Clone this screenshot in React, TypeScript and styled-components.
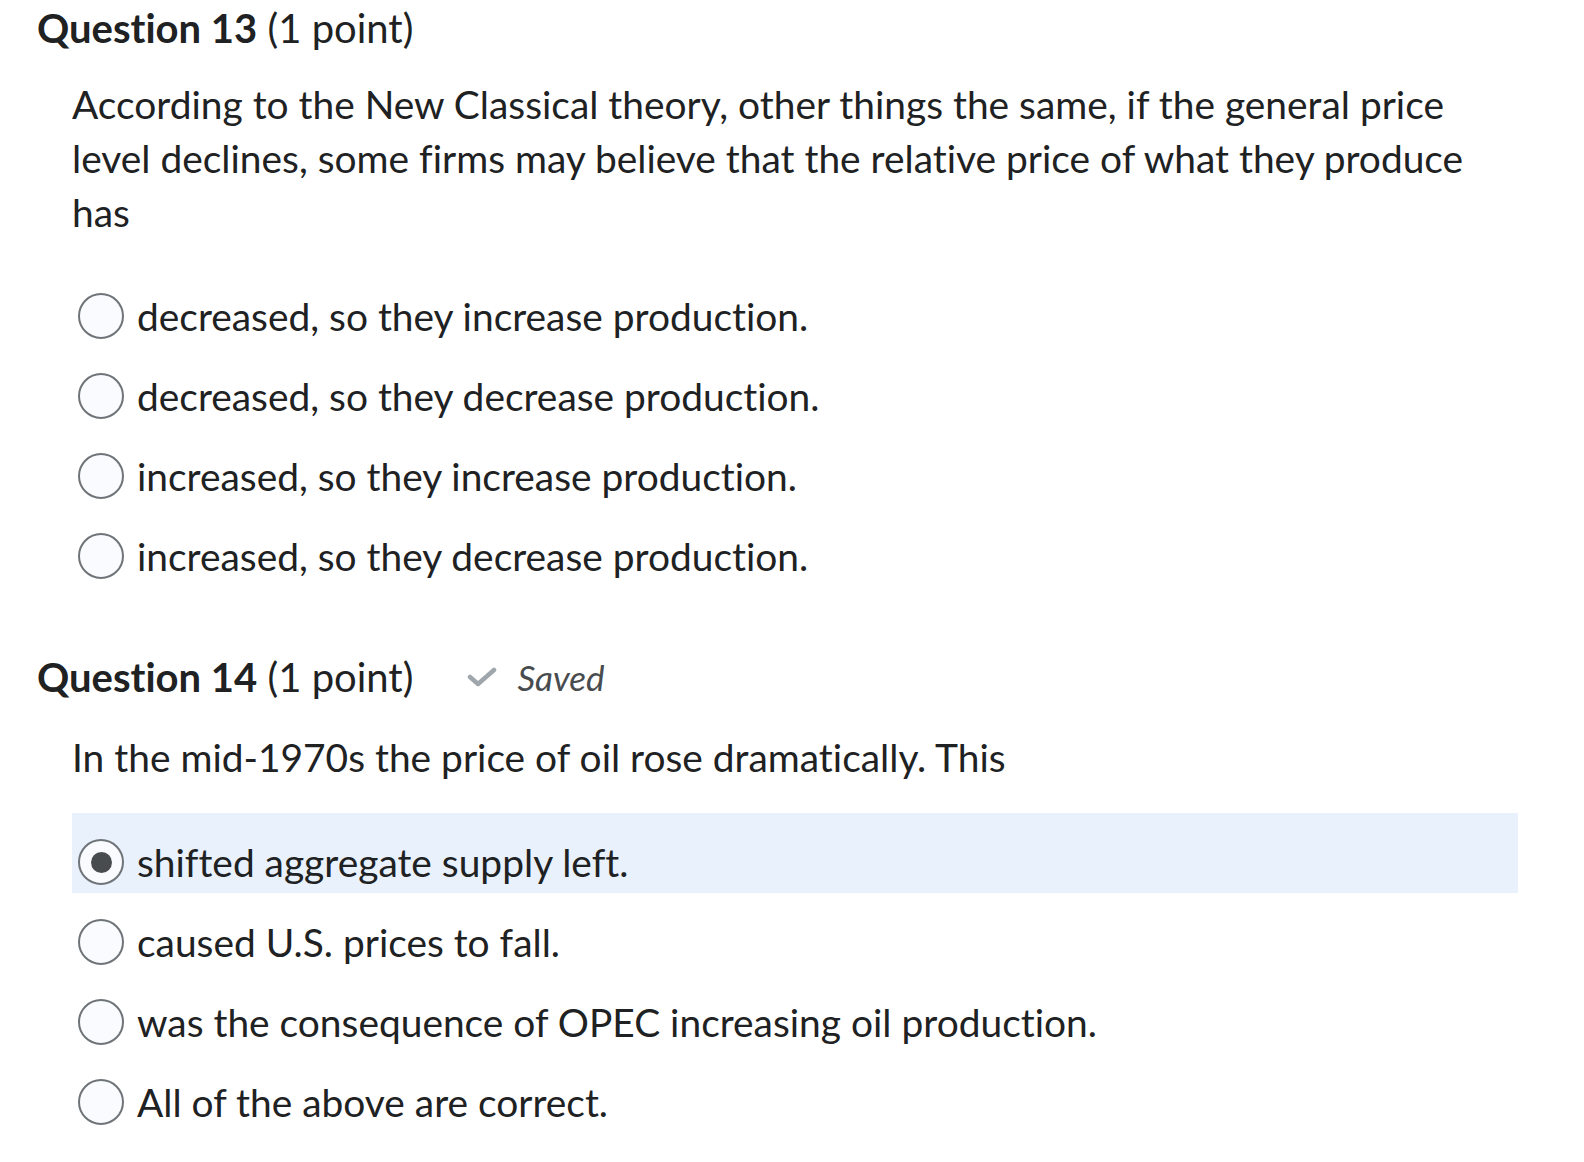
import React from 'react';
import styled, { createGlobalStyle } from 'styled-components';

const GlobalStyle = createGlobalStyle`
  body {
    margin: 0;
    background: #ffffff;
    font-family: Lato, 'Open Sans', sans-serif;
    color: #202122;
    font-variant-ligatures: none;
  }
`;

const Page = styled.div`
  padding: 4px 66px 0 37px;
`;

const QuestionBlock = styled.section`
  margin-bottom: 57px;
`;

const HeaderRow = styled.div`
  display: flex;
  align-items: center;
  gap: 54px;
  height: 48px;
`;

const Heading = styled.h2`
  margin: 0;
  font-size: 40px;
  font-weight: 400;
  line-height: 48px;
  white-space: nowrap;

  strong {
    font-weight: 700;
  }
`;

const SavedTag = styled.span`
  display: flex;
  align-items: center;
  gap: 20px;
  font-size: 35px;
  font-style: italic;
  color: #494c4e;
`;

const Prompt = styled.p<{ $top: number }>`
  margin: ${(p) => p.$top}px 0 0 35px;
  font-size: 38.9px;
  line-height: 54px;
`;

const Options = styled.div<{ $gap: number }>`
  margin: ${(p) => p.$gap}px 0 0 35px;
  display: flex;
  flex-direction: column;
`;

const Option = styled.label<{ $checked?: boolean }>`
  display: flex;
  align-items: center;
  gap: 13px;
  height: 80px;
  padding: ${(p) => (p.$checked ? '18px 0 0 6px' : '0 0 0 6px')};
  margin-bottom: ${(p) => (p.$checked ? '9px' : '0')};
  box-sizing: border-box;
  background: ${(p) => (p.$checked ? '#e8f1fc' : 'transparent')};
  font-size: 38.9px;
  white-space: nowrap;
`;

const Radio = styled.span<{ $checked?: boolean }>`
  width: 46px;
  height: 46px;
  box-sizing: border-box;
  border-radius: 50%;
  border: 2px solid #6f7478;
  background: #f9fbff;
  display: flex;
  align-items: center;
  justify-content: center;
  flex-shrink: 0;

  &::after {
    content: '';
    display: ${(p) => (p.$checked ? 'block' : 'none')};
    width: 21px;
    height: 21px;
    border-radius: 50%;
    background: #494c4e;
  }
`;

const Check = () => (
  <svg width="30" height="20" viewBox="0 0 30 20" fill="none">
    <path d="M3 10 L11 17 L27 3" stroke="#a0a7ac" strokeWidth="4.5" strokeLinecap="round" strokeLinejoin="round" />
  </svg>
);

const q13 = [
  'decreased, so they increase production.',
  'decreased, so they decrease production.',
  'increased, so they increase production.',
  'increased, so they decrease production.',
];

const q14 = [
  'shifted aggregate supply left.',
  'caused U.S. prices to fall.',
  'was the consequence of OPEC increasing oil production.',
  'All of the above are correct.',
];

const App: React.FC = () => {
  return (
    <>
      <GlobalStyle />
      <Page>
        <QuestionBlock>
          <HeaderRow>
            <Heading>
              <strong>Question 13</strong> (1 point)
            </Heading>
          </HeaderRow>
          <Prompt $top={25}>
            According to the New Classical theory, other things the same, if the general price level
            declines, some firms may believe that the relative price of what they produce has
          </Prompt>
          <Options $gap={37}>
            {q13.map((t) => (
              <Option key={t}>
                <Radio />
                {t}
              </Option>
            ))}
          </Options>
        </QuestionBlock>
        <QuestionBlock>
          <HeaderRow>
            <Heading>
              <strong>Question 14</strong> (1 point)
            </Heading>
            <SavedTag>
              <Check />
              Saved
            </SavedTag>
          </HeaderRow>
          <Prompt $top={29}>In the mid-1970s the price of oil rose dramatically. This</Prompt>
          <Options $gap={29}>
            {q14.map((t, i) => (
              <Option key={t} $checked={i === 0}>
                <Radio $checked={i === 0} />
                {t}
              </Option>
            ))}
          </Options>
        </QuestionBlock>
      </Page>
    </>
  );
};

export default App;
